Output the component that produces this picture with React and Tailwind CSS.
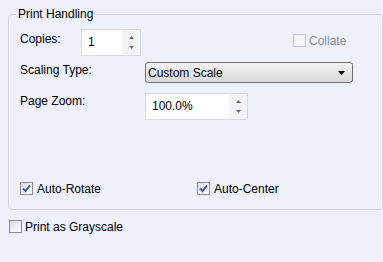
import React from "react";

function Check({ checked, disabled }) {
  return (
    <span
      className={
        "flex w-[13px] h-[13px] shrink-0 items-center justify-center border " +
        (disabled
          ? "border-[#c5c7cc] bg-[#f4f5f8]"
          : "border-[#8e8f94] bg-gradient-to-br from-[#dcdde0] to-[#fbfbfb]")
      }
    >
      {checked && (
        <svg width="9" height="9" viewBox="0 0 9 9">
          <path d="M1 4.5 L3.5 7 L8 1.5" fill="none" stroke="#4a5f9c" strokeWidth="2" />
        </svg>
      )}
    </span>
  );
}

function Spin({ value, w }) {
  return (
    <div className={"flex h-[27px] border border-[#d6d9e2] bg-white " + w}>
      <div className="flex-1 pl-[6px] pt-[5px] leading-[14px] text-black">{value}</div>
      <div className="flex w-[18px] flex-col items-center justify-center gap-[7px] bg-[#f4f4f6]">
        <svg width="5" height="3" viewBox="0 0 5 3">
          <path d="M0 3 L2.5 0 L5 3 Z" fill="#6b6b6b" />
        </svg>
        <svg width="5" height="3" viewBox="0 0 5 3">
          <path d="M0 0 L2.5 3 L5 0 Z" fill="#6b6b6b" />
        </svg>
      </div>
    </div>
  );
}

export default function App() {
  return (
    <div
      className="w-[383px] h-[262px] bg-[#eef0fb] text-[12px] text-black overflow-hidden"
      style={{ fontFamily: '"Liberation Sans", Arial, sans-serif' }}
    >
      <fieldset className="ml-[8px] mt-[6px] w-[375px] rounded-[4px] border border-[#d3d7e2] pb-[14px]">
        <legend className="ml-[7px] px-[2px] leading-[16px]">Print Handling</legend>
        <div className="pl-[11px]">
          <div className="mt-[7px] flex h-[27px]">
            <div className="w-[61px] pt-[3px] leading-[14px]">Copies:</div>
            <Spin value="1" w="w-[60px]" />
            <div className="ml-[152px] mt-[5px] flex h-[13px] items-center gap-[3px]">
              <Check disabled />
              <span className="leading-[14px] text-[#8a8c93]">Collate</span>
            </div>
          </div>
          <div className="mt-[6px] flex h-[21px]">
            <div className="w-[125px] pt-[1px] leading-[14px]">Scaling Type:</div>
            <div className="flex w-[208px] items-center justify-between rounded-[3px] border border-[#6f7075] bg-gradient-to-b from-[#f4f4f4] to-[#d9d9d9] pl-[2px] pr-[7px]">
              <span className="leading-[14px]">Custom Scale</span>
              <svg width="7" height="4" viewBox="0 0 7 4">
                <path d="M0 0 L7 0 L3.5 4 Z" fill="#000" />
              </svg>
            </div>
          </div>
          <div className="mt-[10px] flex h-[27px]">
            <div className="w-[125px] pt-[1px] leading-[14px]">Page Zoom:</div>
            <Spin value="100.0%" w="w-[103px]" />
          </div>
          <div className="mt-[62px] flex h-[13px]">
            <div className="flex w-[177px] items-center gap-[4px]">
              <Check checked />
              <span className="leading-[14px]">Auto-Rotate</span>
            </div>
            <div className="flex items-center gap-[4px]">
              <Check checked />
              <span className="leading-[14px]">Auto-Center</span>
            </div>
          </div>
        </div>
      </fieldset>
      <div className="ml-[9px] mt-[10px] flex h-[13px] items-center gap-[3px]">
        <Check />
        <span className="leading-[14px]">Print as Grayscale</span>
      </div>
    </div>
  );
}
